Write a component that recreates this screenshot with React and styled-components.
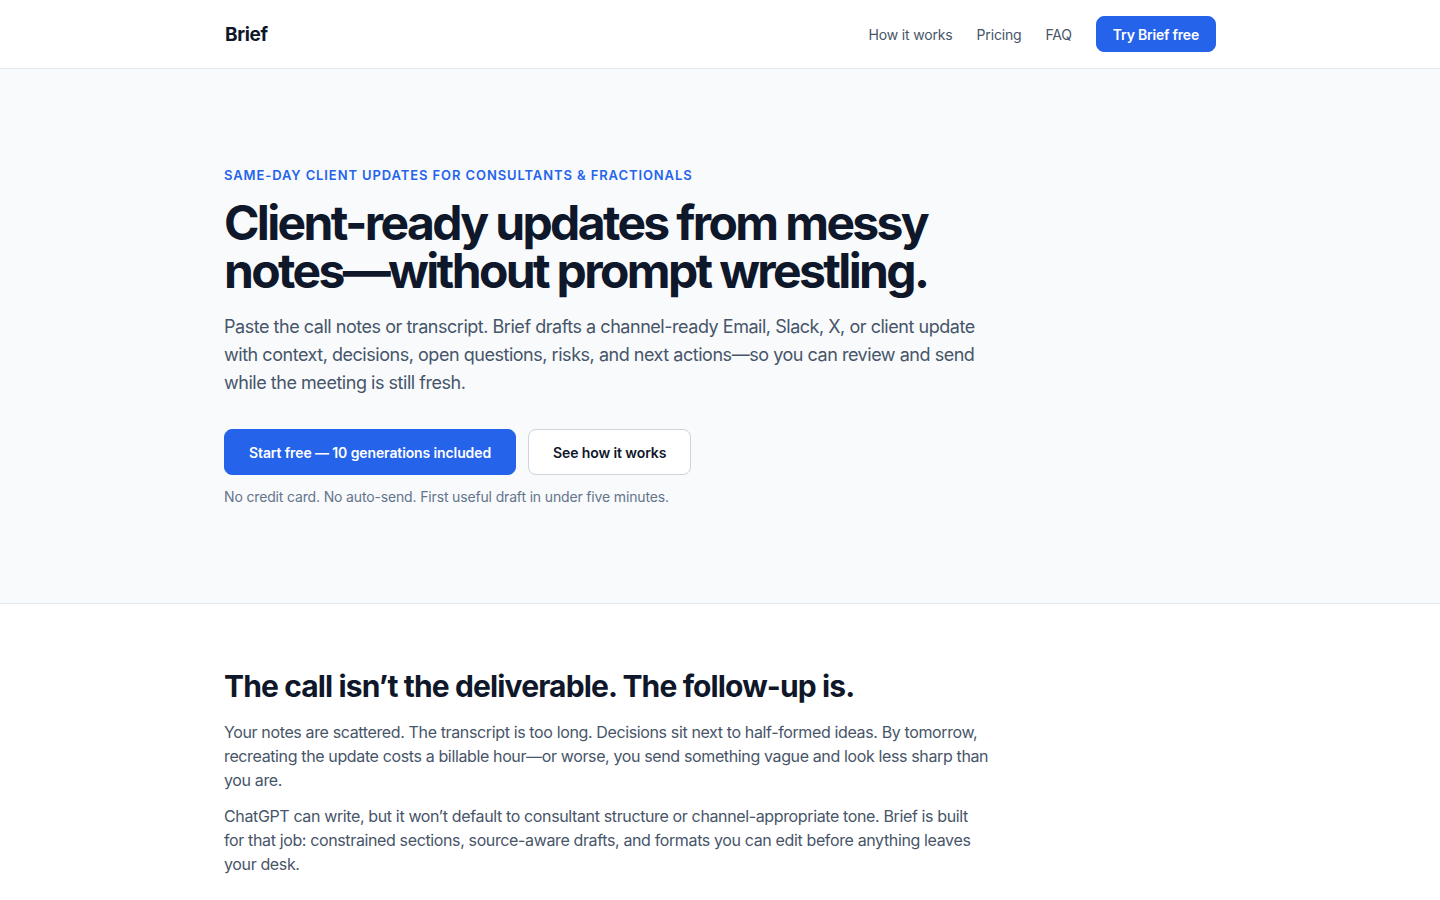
import React from "react";
import styled, { createGlobalStyle } from "styled-components";

const Global = createGlobalStyle`
  * { box-sizing: border-box; }
  body {
    margin: 0;
    font-family: Inter, "Noto Sans", sans-serif;
    color: #0f172a;
    background: #ffffff;
    -webkit-font-smoothing: antialiased;
  }
  h1, h2, p { margin: 0; }
`;

const Header = styled.header`
  height: 69px;
  border-bottom: 1px solid #e2e8f0;
  background: #ffffff;
`;

const Container = styled.div`
  max-width: 992px;
  margin: 0 auto;
`;

const HeaderInner = styled(Container)`
  height: 68px;
  display: flex;
  align-items: center;
  justify-content: space-between;
`;

const Logo = styled.a`
  font-size: 19px;
  font-weight: 700;
  letter-spacing: -0.02em;
  color: #0f172a;
  text-decoration: none;
  padding-left: 1px;
`;

const Nav = styled.nav`
  display: flex;
  align-items: center;
  gap: 24px;
`;

const NavLink = styled.a`
  font-size: 14px;
  letter-spacing: -0.012em;
  color: #475569;
  text-decoration: none;
`;

const Button = styled.a`
  display: inline-flex;
  align-items: center;
  justify-content: center;
  text-decoration: none;
  font-weight: 600;
  border-radius: 8px;
  font-size: 14px;
  letter-spacing: ${(p) => (p.$small ? "-0.015em" : "-0.008em")};
  height: ${(p) => (p.$small ? "36px" : "46px")};
  padding: ${(p) => (p.$small ? "0 16px" : "0 24px")};
  background: ${(p) => (p.$variant === "secondary" ? "#ffffff" : "#2563eb")};
  color: ${(p) => (p.$variant === "secondary" ? "#0f172a" : "#ffffff")};
  border: 1px solid
    ${(p) => (p.$variant === "secondary" ? "#cbd5e1" : "#2563eb")};
`;

const Hero = styled.section`
  background: #f8fafc;
  border-bottom: 1px solid #e2e8f0;
  padding: 96px 0 96px;
`;

const Eyebrow = styled.p`
  font-size: 13px;
  line-height: 20px;
  font-weight: 600;
  letter-spacing: 0.069em;
  text-transform: uppercase;
  color: #2563eb;
`;

const Title = styled.h1`
  margin-top: 14px;
  max-width: 768px;
  font-size: 48px;
  line-height: 48px;
  font-weight: 700;
  letter-spacing: -0.055em;
  color: #0f172a;
`;

const Lead = styled.p`
  margin-top: 18px;
  max-width: 768px;
  font-size: 18px;
  line-height: 28px;
  letter-spacing: -0.026em;
  color: #475569;
`;

const Actions = styled.div`
  margin-top: 32px;
  display: flex;
  gap: 12px;
`;

const Note = styled.p`
  margin-top: 12px;
  font-size: 14px;
  line-height: 20px;
  letter-spacing: -0.011em;
  color: #64748b;
`;

const Section = styled.section`
  padding: 64px 0;
`;

const SectionTitle = styled.h2`
  font-size: 30px;
  line-height: 36px;
  font-weight: 700;
  letter-spacing: -0.029em;
  color: #0f172a;
`;

const Body = styled.div`
  margin-top: 16px;
  max-width: 768px;
  display: flex;
  flex-direction: column;
  gap: 12px;
`;

const BodyText = styled.p`
  font-size: 16px;
  line-height: 24px;
  letter-spacing: -0.023em;
  color: #475569;
`;

export default function App() {
  return (
    <>
      <Global />
      <Header>
        <HeaderInner>
          <Logo href="#">Brief</Logo>
          <Nav>
            <NavLink href="#">How it works</NavLink>
            <NavLink href="#">Pricing</NavLink>
            <NavLink href="#">FAQ</NavLink>
            <Button $small href="#">Try Brief free</Button>
          </Nav>
        </HeaderInner>
      </Header>
      <Hero>
        <Container>
          <Eyebrow>Same-day client updates for consultants &amp; fractionals</Eyebrow>
          <Title>Client-ready updates from messy notes—without prompt wrestling.</Title>
          <Lead>
            Paste the call notes or transcript. Brief drafts a channel-ready Email, Slack, X, or client
            update with context, decisions, open questions, risks, and next actions—so you can review
            and send while the meeting is still fresh.
          </Lead>
          <Actions>
            <Button href="#">Start free — 10 generations included</Button>
            <Button $variant="secondary" href="#">See how it works</Button>
          </Actions>
          <Note>No credit card. No auto-send. First useful draft in under five minutes.</Note>
        </Container>
      </Hero>
      <Section>
        <Container>
          <SectionTitle>The call isn’t the deliverable. The follow-up is.</SectionTitle>
          <Body>
            <BodyText>
              Your notes are scattered. The transcript is too long. Decisions sit next to half-formed
              ideas. By tomorrow, recreating the update costs a billable hour—or worse, you send
              something vague and look less sharp than you are.
            </BodyText>
            <BodyText>
              ChatGPT can write, but it won’t default to consultant structure or channel-appropriate
              tone. Brief is built for that job: constrained sections, source-aware drafts, and formats
              you can edit before anything leaves your desk.
            </BodyText>
          </Body>
        </Container>
      </Section>
    </>
  );
}
